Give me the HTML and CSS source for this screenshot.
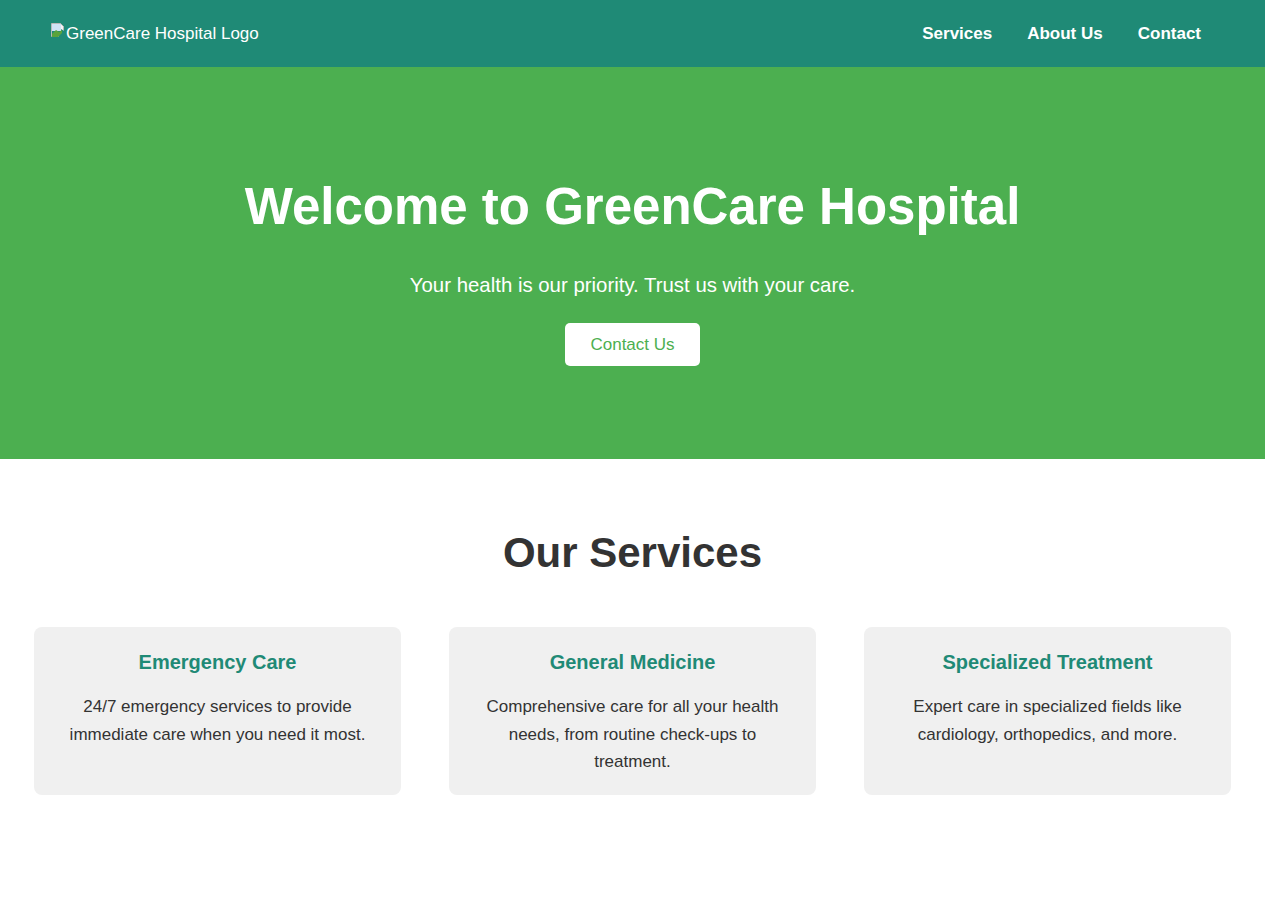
FILE: index.html
```html
<!DOCTYPE html>
<html lang="en">
<head>
<meta charset="utf-8">
<title>GreenCare Hospital</title>
<link rel="stylesheet" href="styles.css">
</head>
<body>
<header class="site-header">
  <div class="logo">
    <svg class="broken-icon" width="16" height="16" viewBox="0 0 16 16" aria-hidden="true">
      <path d="M1.5 1.5h9l3 3v4" fill="#f4f4f4" stroke="#b9b9b9"/>
      <path d="M1.5 1.5v13h7" fill="none" stroke="#b9b9b9"/>
      <rect x="2" y="2" width="9" height="7" fill="#cfe3f5"/>
      <path d="M2 12 L6 8 L9 10 L12 8 L12 11 L8 15 L2 15 Z" fill="#5aa33c"/>
    </svg><span class="logo-alt">GreenCare Hospital Logo</span>
  </div>
  <nav class="main-nav">
    <a href="#services">Services</a>
    <a href="#about">About Us</a>
    <a href="#contact">Contact</a>
  </nav>
</header>

<section class="hero">
  <h1>Welcome to GreenCare Hospital</h1>
  <p>Your health is our priority. Trust us with your care.</p>
  <a class="hero-btn" href="#contact">Contact Us</a>
</section>

<section class="services" id="services">
  <h2>Our Services</h2>
  <div class="service-list">
    <div class="service-card">
      <h3>Emergency Care</h3>
      <p>24/7 emergency services to provide immediate care when you need it most.</p>
    </div>
    <div class="service-card">
      <h3>General Medicine</h3>
      <p>Comprehensive care for all your health needs, from routine check-ups to treatment.</p>
    </div>
    <div class="service-card">
      <h3>Specialized Treatment</h3>
      <p>Expert care in specialized fields like cardiology, orthopedics, and more.</p>
    </div>
  </div>
</section>
</body>
</html>
```

FILE: styles.css
```css
* { box-sizing: border-box; }

body {
  margin: 0;
  font-family: "Liberation Sans", Arial, sans-serif;
  color: #333;
  background: #fff;
}

.site-header {
  height: 67px;
  background: #1f8a76;
  display: flex;
  align-items: center;
  justify-content: space-between;
  padding: 0 64px 0 50px;
}

.logo {
  display: flex;
  align-items: center;
  color: #fff;
  font-size: 17px;
}

.broken-icon { margin-top: -8px; }

.main-nav {
  display: flex;
  gap: 35px;
}

.main-nav a {
  color: #fff;
  text-decoration: none;
  font-weight: bold;
  font-size: 17px;
}

.hero {
  background: #4caf50;
  height: 392px;
  color: #fff;
  text-align: center;
  padding-top: 175px;
  display: flex;
  flex-direction: column;
  align-items: center;
}

.hero h1 {
  margin: 0;
  font-size: 51px;
  line-height: 1;
  margin-top: -61px;
}

.hero p {
  margin: 42px 0 0;
  font-size: 20.4px;
}

.hero-btn {
  margin-top: 26px;
  display: inline-block;
  background: #fff;
  color: #4caf50;
  text-decoration: none;
  font-size: 17px;
  line-height: 19px;
  padding: 12px 25px;
  border-radius: 5px;
}

.services {
  padding: 70px 34px 60px;
  text-align: center;
}

.services h2 {
  margin: 0 0 50px;
  font-size: 42px;
  line-height: 1.15;
}

.service-list {
  display: flex;
  gap: 48px;
}

.service-card {
  flex: 1;
  background: #f0f0f0;
  border-radius: 8px;
  padding: 24px 30px 19px;
  min-height: 168px;
}

.service-card h3 {
  margin: 0 0 19px;
  color: #1f8a76;
  font-size: 20px;
}

.service-card p {
  margin: 0;
  font-size: 17px;
  line-height: 1.62;
}
```
